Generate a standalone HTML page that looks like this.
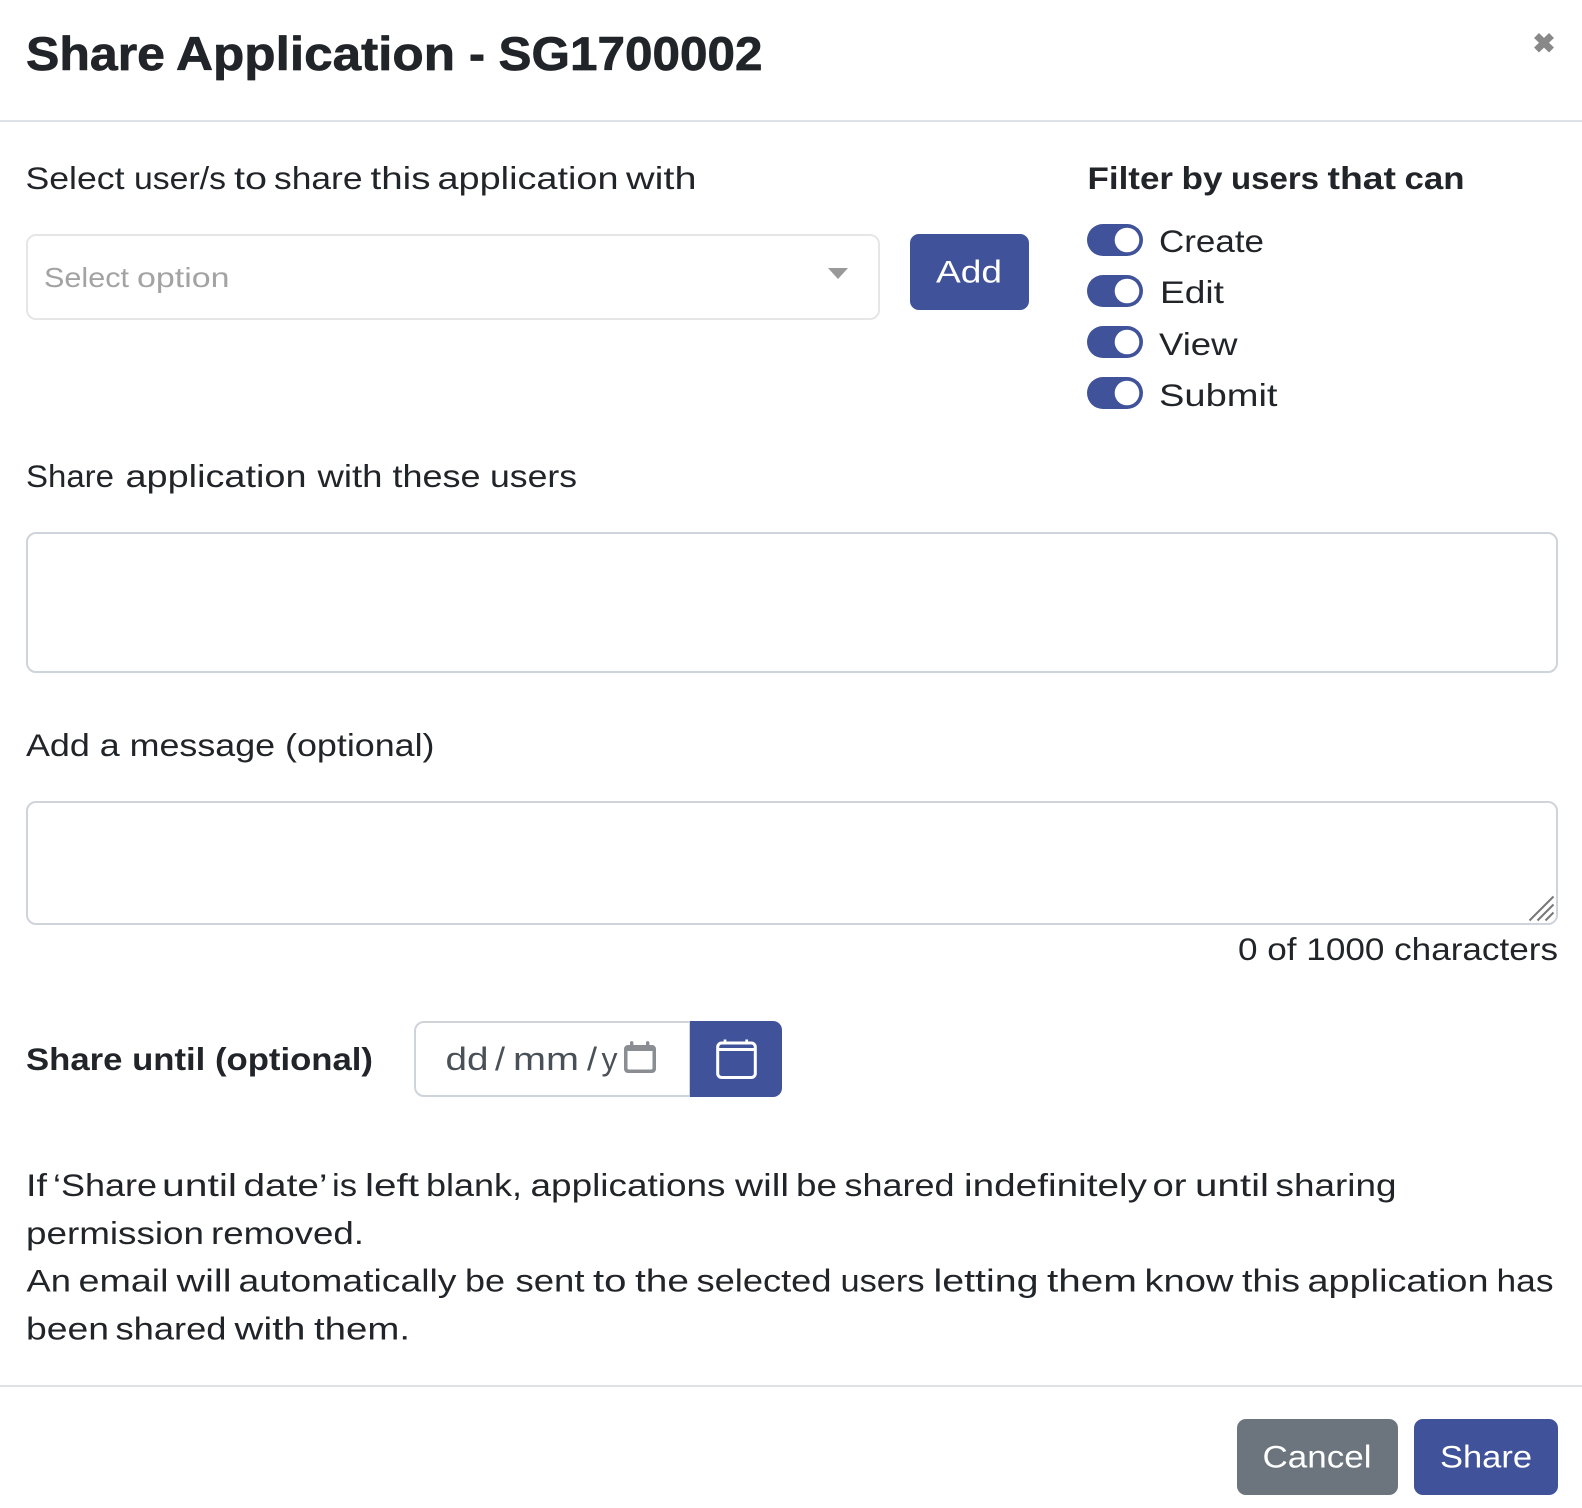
<!DOCTYPE html>
<html lang="en">
<head>
<meta charset="utf-8">
<title>Share Application</title>
<style>
html,body{margin:0;padding:0;background:#fff;width:1582px;height:1508px;overflow:hidden}
svg{display:block}
text{font-family:"Liberation Sans",Arial,sans-serif;fill:#212529;font-size:31.5px}
.b{font-weight:700}
.w{fill:#fff}
.t{font-size:47px;stroke:#212529;stroke-width:.7px;stroke-linejoin:round}
.p{font-size:27.5px;fill:#a3a3a3}
.d{font-size:32px;fill:#495057}
</style>
</head>
<body>
<svg width="1582" height="1508" viewBox="0 0 1582 1508" xmlns="http://www.w3.org/2000/svg">
<rect width="1582" height="1508" fill="#fff"/>

<!-- header -->
<text class="b t" x="26" y="70" textLength="139" lengthAdjust="spacingAndGlyphs">Share</text>
<text class="b t" x="176" y="70" textLength="279" lengthAdjust="spacingAndGlyphs">Application</text>
<text class="b t" x="469" y="70" textLength="16" lengthAdjust="spacingAndGlyphs">-</text>
<text class="b t" x="498.500" y="70" textLength="264" lengthAdjust="spacingAndGlyphs">SG1700002</text>
<path d="M1536.500 35.500L1551.500 50M1551.500 35.500L1536.500 50" stroke="#888" stroke-width="7" fill="none"/>
<rect x="0" y="120" width="1582" height="2" fill="#dee2e6"/>

<!-- select section -->
<text x="25.500" y="189" textLength="99" lengthAdjust="spacingAndGlyphs">Select</text>
<text x="134" y="189" textLength="92" lengthAdjust="spacingAndGlyphs">user/s</text>
<text x="234" y="189" textLength="33" lengthAdjust="spacingAndGlyphs">to</text>
<text x="274" y="189" textLength="88.500" lengthAdjust="spacingAndGlyphs">share</text>
<text x="370.500" y="189" textLength="60" lengthAdjust="spacingAndGlyphs">this</text>
<text x="437.500" y="189" textLength="181" lengthAdjust="spacingAndGlyphs">application</text>
<text x="626" y="189" textLength="70.500" lengthAdjust="spacingAndGlyphs">with</text>
<rect x="27" y="235" width="852" height="84" rx="9" fill="#fff" stroke="#e6e6e6" stroke-width="2"/>
<text class="p" x="44" y="287" textLength="85" lengthAdjust="spacingAndGlyphs">Select</text>
<text class="p" x="137" y="287" textLength="92.500" lengthAdjust="spacingAndGlyphs">option</text>
<path d="M828 268H848L838 279Z" fill="#999"/>
<rect x="910" y="234" width="119" height="76" rx="9" fill="#40529a"/>
<text class="w" x="936" y="282.500" textLength="66" lengthAdjust="spacingAndGlyphs">Add</text>

<!-- filter -->
<text class="b" x="1087.500" y="189" textLength="85.500" lengthAdjust="spacingAndGlyphs">Filter</text>
<text class="b" x="1181.500" y="189" textLength="41" lengthAdjust="spacingAndGlyphs">by</text>
<text class="b" x="1231" y="189" textLength="88" lengthAdjust="spacingAndGlyphs">users</text>
<text class="b" x="1327.500" y="189" textLength="68.500" lengthAdjust="spacingAndGlyphs">that</text>
<text class="b" x="1404.500" y="189" textLength="60" lengthAdjust="spacingAndGlyphs">can</text>
<rect x="1087" y="224" width="56" height="32" rx="16" fill="#40529a"/><circle cx="1127" cy="240" r="12.300" fill="#fff"/>
<rect x="1087" y="275" width="56" height="32" rx="16" fill="#40529a"/><circle cx="1127" cy="291" r="12.300" fill="#fff"/>
<rect x="1087" y="326" width="56" height="32" rx="16" fill="#40529a"/><circle cx="1127" cy="342" r="12.300" fill="#fff"/>
<rect x="1087" y="377" width="56" height="32" rx="16" fill="#40529a"/><circle cx="1127" cy="393" r="12.300" fill="#fff"/>
<text x="1159" y="252" textLength="105" lengthAdjust="spacingAndGlyphs">Create</text>
<text x="1160" y="303" textLength="64" lengthAdjust="spacingAndGlyphs">Edit</text>
<text x="1159" y="355" textLength="78.500" lengthAdjust="spacingAndGlyphs">View</text>
<text x="1159" y="406" textLength="118.500" lengthAdjust="spacingAndGlyphs">Submit</text>

<!-- share with -->
<text x="26" y="487" textLength="88" lengthAdjust="spacingAndGlyphs">Share</text>
<text x="125.500" y="487" textLength="181" lengthAdjust="spacingAndGlyphs">application</text>
<text x="317.500" y="487" textLength="65" lengthAdjust="spacingAndGlyphs">with</text>
<text x="392.500" y="487" textLength="88" lengthAdjust="spacingAndGlyphs">these</text>
<text x="490" y="487" textLength="87" lengthAdjust="spacingAndGlyphs">users</text>
<rect x="27" y="533" width="1530" height="139" rx="9" fill="#fff" stroke="#ced4da" stroke-width="2"/>

<!-- message -->
<text x="26" y="756" textLength="408.500" lengthAdjust="spacingAndGlyphs">Add a message (optional)</text>
<rect x="27" y="802" width="1530" height="122" rx="9" fill="#fff" stroke="#ced4da" stroke-width="2"/>
<path d="M1529.500 920.500L1553.500 896.500M1537.500 920.500L1553.500 904.500M1545.500 920.500L1553.500 912.500" stroke="#777" stroke-width="2" fill="none"/>
<text x="1238" y="960" textLength="320" lengthAdjust="spacingAndGlyphs">0 of 1000 characters</text>

<!-- share until -->
<text class="b" x="26" y="1070" textLength="347" lengthAdjust="spacingAndGlyphs">Share until (optional)</text>
<path d="M690 1022H424a9 9 0 0 0-9 9V1087a9 9 0 0 0 9 9H690Z" fill="#fff" stroke="#ced4da" stroke-width="2"/>
<text class="d" x="445.500" y="1070" textLength="43" lengthAdjust="spacingAndGlyphs">dd</text>
<text class="d" x="495" y="1070" textLength="10" lengthAdjust="spacingAndGlyphs">/</text>
<text class="d" x="513" y="1070" textLength="66" lengthAdjust="spacingAndGlyphs">mm</text>
<text class="d" x="587" y="1070" textLength="10" lengthAdjust="spacingAndGlyphs">/</text>
<text class="d" x="601.500" y="1070" textLength="16" lengthAdjust="spacingAndGlyphs">y</text>
<path d="M630 1045V1042.800a1.700 1.700 0 0 1 3.400 0V1045H646V1042.800a1.700 1.700 0 0 1 3.400 0V1045H652a4 4 0 0 1 4 4V1069a4 4 0 0 1-4 4H628a4 4 0 0 1-4-4V1049a4 4 0 0 1 4-4ZM627.500 1051V1068a1.500 1.500 0 0 0 1.500 1.500H651a1.500 1.500 0 0 0 1.500-1.500V1051Z" fill="#8a8d91" fill-rule="evenodd"/>
<path d="M690 1021H773a9 9 0 0 1 9 9V1088a9 9 0 0 1-9 9H690Z" fill="#40529a"/>
<rect x="717.700" y="1043" width="37.600" height="34.500" rx="4" fill="none" stroke="#fff" stroke-width="3"/>
<path d="M717 1049.500H756" stroke="#fff" stroke-width="3"/>
<path d="M725 1039.500V1043M746.700 1039.500V1043" stroke="#fff" stroke-width="2.700"/>

<!-- paragraph -->
<g>
<text x="26" y="1196" textLength="21" lengthAdjust="spacingAndGlyphs">If</text>
<text x="53" y="1196" textLength="104" lengthAdjust="spacingAndGlyphs">‘Share</text>
<text x="162" y="1196" textLength="75" lengthAdjust="spacingAndGlyphs">until</text>
<text x="243.500" y="1196" textLength="84" lengthAdjust="spacingAndGlyphs">date’</text>
<text x="332" y="1196" textLength="25" lengthAdjust="spacingAndGlyphs">is</text>
<text x="365" y="1196" textLength="54" lengthAdjust="spacingAndGlyphs">left</text>
<text x="426" y="1196" textLength="96" lengthAdjust="spacingAndGlyphs">blank,</text>
<text x="530.500" y="1196" textLength="195" lengthAdjust="spacingAndGlyphs">applications</text>
<text x="735" y="1196" textLength="54" lengthAdjust="spacingAndGlyphs">will</text>
<text x="796" y="1196" textLength="41" lengthAdjust="spacingAndGlyphs">be</text>
<text x="844.500" y="1196" textLength="110" lengthAdjust="spacingAndGlyphs">shared</text>
<text x="964" y="1196" textLength="183" lengthAdjust="spacingAndGlyphs">indefinitely</text>
<text x="1152.500" y="1196" textLength="34" lengthAdjust="spacingAndGlyphs">or</text>
<text x="1195" y="1196" textLength="74" lengthAdjust="spacingAndGlyphs">until</text>
<text x="1275.500" y="1196" textLength="121" lengthAdjust="spacingAndGlyphs">sharing</text>

<text x="26" y="1244" textLength="178" lengthAdjust="spacingAndGlyphs">permission</text>
<text x="211" y="1244" textLength="153" lengthAdjust="spacingAndGlyphs">removed.</text>

<text x="26.500" y="1291.500" textLength="44.500" lengthAdjust="spacingAndGlyphs">An</text>
<text x="78.500" y="1291.500" textLength="90" lengthAdjust="spacingAndGlyphs">email</text>
<text x="176.500" y="1291.500" textLength="55" lengthAdjust="spacingAndGlyphs">will</text>
<text x="238.500" y="1291.500" textLength="218" lengthAdjust="spacingAndGlyphs">automatically</text>
<text x="465" y="1291.500" textLength="40" lengthAdjust="spacingAndGlyphs">be</text>
<text x="515.500" y="1291.500" textLength="69" lengthAdjust="spacingAndGlyphs">sent</text>
<text x="593" y="1291.500" textLength="33.500" lengthAdjust="spacingAndGlyphs">to</text>
<text x="635" y="1291.500" textLength="54" lengthAdjust="spacingAndGlyphs">the</text>
<text x="696.500" y="1291.500" textLength="135" lengthAdjust="spacingAndGlyphs">selected</text>
<text x="840.500" y="1291.500" textLength="84" lengthAdjust="spacingAndGlyphs">users</text>
<text x="933.500" y="1291.500" textLength="105" lengthAdjust="spacingAndGlyphs">letting</text>
<text x="1047" y="1291.500" textLength="90" lengthAdjust="spacingAndGlyphs">them</text>
<text x="1144.500" y="1291.500" textLength="89" lengthAdjust="spacingAndGlyphs">know</text>
<text x="1242" y="1291.500" textLength="58" lengthAdjust="spacingAndGlyphs">this</text>
<text x="1307.500" y="1291.500" textLength="181" lengthAdjust="spacingAndGlyphs">application</text>
<text x="1496.500" y="1291.500" textLength="57" lengthAdjust="spacingAndGlyphs">has</text>

<text x="26" y="1339.500" textLength="83" lengthAdjust="spacingAndGlyphs">been</text>
<text x="115.500" y="1339.500" textLength="111" lengthAdjust="spacingAndGlyphs">shared</text>
<text x="234.500" y="1339.500" textLength="71" lengthAdjust="spacingAndGlyphs">with</text>
<text x="314" y="1339.500" textLength="96" lengthAdjust="spacingAndGlyphs">them.</text>
</g>

<!-- footer -->
<rect x="0" y="1385" width="1582" height="2" fill="#dee2e6"/>
<rect x="1237" y="1419" width="161" height="76" rx="9" fill="#6c757d"/>
<text class="w" x="1262.500" y="1467.500" textLength="109" lengthAdjust="spacingAndGlyphs">Cancel</text>
<rect x="1414" y="1419" width="144" height="76" rx="9" fill="#40529a"/>
<text class="w" x="1440" y="1467.500" textLength="92" lengthAdjust="spacingAndGlyphs">Share</text>
</svg>
</body>
</html>
